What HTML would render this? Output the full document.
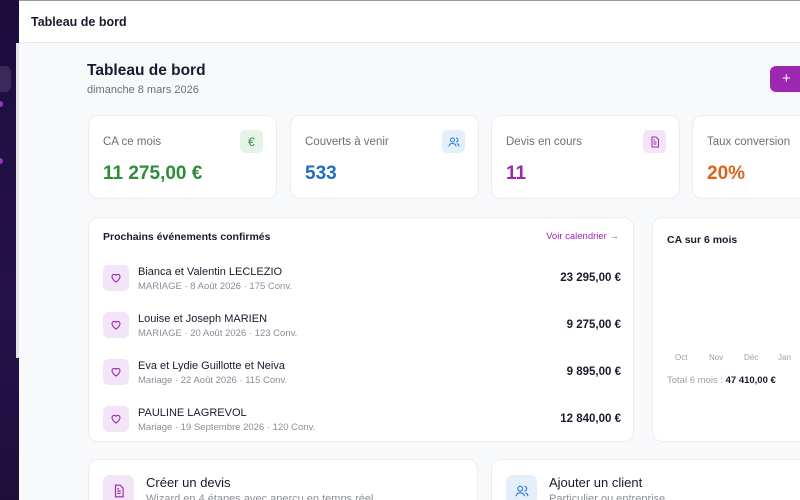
<!DOCTYPE html>
<html style="width:800px;height:500px;overflow:hidden"><head><meta charset="utf-8"><style>
*{margin:0;padding:0;box-sizing:border-box}
body{width:800px;height:500px;overflow:hidden;position:relative;background:#f8f9fb;font-family:"Liberation Sans",sans-serif;color:#1a1a2e}
.a{position:absolute}
.side{left:0;top:0;width:19px;height:500px;background:linear-gradient(#1d0d3d,#24124a 60%,#1d0f3a)}
.hdr{left:19px;top:0;width:781px;height:43px;background:#fff;border-bottom:1px solid #e8e8ee;border-top:1px solid #999}
.card{background:#fff;border:1px solid #ececf1;border-radius:10px}
.lbl{font-size:11.5px;color:#6b6f7a}
.val{font-size:19px;font-weight:bold}
.ib{width:23px;height:23px;border-radius:5px;display:flex;align-items:center;justify-content:center}
.ev{position:absolute;left:14px;width:518px;height:30px}
.ev .ic{position:absolute;left:0;top:0;width:26px;height:26px;border-radius:5px;background:#f4e4f7;display:flex;align-items:center;justify-content:center}
.ev .n{position:absolute;left:35px;top:1px;font-size:11px;color:#1a1a2e}
.ev .s{position:absolute;left:35px;top:16px;font-size:9.5px;color:#8a8e98}
.ev .p{position:absolute;right:0;top:7px;font-size:11.5px;font-weight:bold;color:#1a1a2e}
.m{position:absolute;top:135px;font-size:8px;color:#9aa0aa}
</style></head><body>
<div class="a side"></div>
<div class="a" style="left:0;top:66px;width:11px;height:26px;background:#3a2a5a;border-radius:0 6px 6px 0"></div>
<div class="a" style="left:-3px;top:101px;width:6px;height:6px;border-radius:3px;background:#a030c0"></div>
<div class="a" style="left:-3px;top:158px;width:6px;height:6px;border-radius:3px;background:#a030c0"></div>
<div class="a hdr"><div class="a" style="left:12px;top:14px;font-size:12.5px;font-weight:bold;color:#1a1a2e">Tableau de bord</div></div>
<div class="a" style="left:16px;top:43px;width:3px;height:315px;background:#e4e4e8"></div>
<div class="a" style="left:87px;top:62px;font-size:15.5px;font-weight:bold">Tableau de bord</div>
<div class="a" style="left:87px;top:84px;font-size:11px;color:#6b6f7a">dimanche 8 mars 2026</div>
<div class="a" style="left:770px;top:66px;width:40px;height:26px;background:#9c27b0;border-radius:6px;color:#fff;font-size:15px;line-height:26px;padding-left:12px">+</div>

<div class="a card" style="left:88px;top:115px;width:189px;height:84px">
<div class="a lbl" style="left:14px;top:20px">CA ce mois</div>
<div class="a ib" style="left:151px;top:14px;background:#e6f4e8;color:#2e8b3a;font-size:12px">€</div>
<div class="a val" style="left:14px;top:47px;color:#2e8b3a">11 275,00 €</div></div>
<div class="a card" style="left:290px;top:115px;width:189px;height:84px">
<div class="a lbl" style="left:14px;top:20px">Couverts à venir</div>
<div class="a ib" style="left:151px;top:14px;background:#e3f0fc"><svg width="12" height="12" viewBox="0 0 24 24" fill="none" stroke="#2a7ad0" stroke-width="2"><circle cx="9" cy="8" r="4"/><path d="M2 21c0-4 3-6 7-6s7 2 7 6M16 4a4 4 0 010 8M22 21c0-3-2-5-4-6"/></svg></div>
<div class="a val" style="left:14px;top:47px;color:#1f6fc0">533</div></div>
<div class="a card" style="left:491px;top:115px;width:189px;height:84px">
<div class="a lbl" style="left:14px;top:20px">Devis en cours</div>
<div class="a ib" style="left:151px;top:14px;background:#f4e4f7"><svg width="12" height="12" viewBox="0 0 24 24" fill="none" stroke="#9c27b0" stroke-width="2"><path d="M6 2h8l5 5v15H6z M9 12h6M9 16h6M9 8h3"/></svg></div>
<div class="a val" style="left:14px;top:47px;color:#9c27b0">11</div></div>
<div class="a card" style="left:692px;top:115px;width:189px;height:84px">
<div class="a lbl" style="left:14px;top:20px">Taux conversion</div>
<div class="a val" style="left:14px;top:47px;color:#e0601a">20%</div></div>

<div class="a card" style="left:88px;top:217px;width:546px;height:225px">
<div class="a" style="left:14px;top:13px;font-size:10.5px;font-weight:bold">Prochains événements confirmés</div>
<div class="a" style="right:14px;top:13px;font-size:9.5px;color:#9c27b0">Voir calendrier →</div>
<div class="ev" style="top:47px"><div class="ic"><svg width="12" height="12" viewBox="0 0 24 24" fill="none" stroke="#9c27b0" stroke-width="2.2"><path d="M12 20s-8-5-8-11a4.5 4.5 0 018-2.5A4.5 4.5 0 0120 9c0 6-8 11-8 11z"/></svg></div><div class="n">Bianca et Valentin LECLEZIO</div><div class="s">MARIAGE · 8 Août 2026 · 175 Conv.</div><div class="p">23 295,00 €</div></div>
<div class="ev" style="top:94px"><div class="ic"><svg width="12" height="12" viewBox="0 0 24 24" fill="none" stroke="#9c27b0" stroke-width="2.2"><path d="M12 20s-8-5-8-11a4.5 4.5 0 018-2.5A4.5 4.5 0 0120 9c0 6-8 11-8 11z"/></svg></div><div class="n">Louise et Joseph MARIEN</div><div class="s">MARIAGE · 20 Août 2026 · 123 Conv.</div><div class="p">9 275,00 €</div></div>
<div class="ev" style="top:141px"><div class="ic"><svg width="12" height="12" viewBox="0 0 24 24" fill="none" stroke="#9c27b0" stroke-width="2.2"><path d="M12 20s-8-5-8-11a4.5 4.5 0 018-2.5A4.5 4.5 0 0120 9c0 6-8 11-8 11z"/></svg></div><div class="n">Eva et Lydie Guillotte et Neiva</div><div class="s">Mariage · 22 Août 2026 · 115 Conv.</div><div class="p">9 895,00 €</div></div>
<div class="ev" style="top:188px"><div class="ic"><svg width="12" height="12" viewBox="0 0 24 24" fill="none" stroke="#9c27b0" stroke-width="2.2"><path d="M12 20s-8-5-8-11a4.5 4.5 0 018-2.5A4.5 4.5 0 0120 9c0 6-8 11-8 11z"/></svg></div><div class="n">PAULINE LAGREVOL</div><div class="s">Mariage · 19 Septembre 2026 · 120 Conv.</div><div class="p">12 840,00 €</div></div>
</div>

<div class="a card" style="left:652px;top:217px;width:170px;height:225px">
<div class="a" style="left:14px;top:16px;font-size:10.5px;font-weight:bold">CA sur 6 mois</div>
<div class="m" style="left:22px">Oct</div><div class="m" style="left:56px">Nov</div><div class="m" style="left:91px">Déc</div><div class="m" style="left:125px">Jan</div>
<div class="a" style="left:14px;top:157px;font-size:9.5px;color:#9aa0aa;white-space:nowrap">Total 6 mois : <b style="color:#1a1a2e">47 410,00 €</b></div>
</div>

<div class="a card" style="left:88px;top:459px;width:390px;height:60px">
<div class="a" style="left:14px;top:15px;width:31px;height:31px;border-radius:7px;background:#f4e4f7;display:flex;align-items:center;justify-content:center"><svg width="14" height="14" viewBox="0 0 24 24" fill="none" stroke="#9c27b0" stroke-width="2"><path d="M6 2h8l5 5v15H6z M9 12h6M9 16h6M9 8h3"/></svg></div>
<div class="a" style="left:57px;top:15px;font-size:13px">Créer un devis</div>
<div class="a" style="left:57px;top:33px;font-size:11px;color:#8a8e98">Wizard en 4 étapes avec aperçu en temps réel</div></div>
<div class="a card" style="left:491px;top:459px;width:390px;height:60px">
<div class="a" style="left:14px;top:15px;width:31px;height:31px;border-radius:7px;background:#e3f0fc;display:flex;align-items:center;justify-content:center"><svg width="14" height="14" viewBox="0 0 24 24" fill="none" stroke="#2a7ad0" stroke-width="2"><circle cx="9" cy="8" r="4"/><path d="M2 21c0-4 3-6 7-6s7 2 7 6M16 4a4 4 0 010 8M22 21c0-3-2-5-4-6"/></svg></div>
<div class="a" style="left:57px;top:15px;font-size:13px">Ajouter un client</div>
<div class="a" style="left:57px;top:33px;font-size:11px;color:#8a8e98">Particulier ou entreprise</div></div>
</body></html>
